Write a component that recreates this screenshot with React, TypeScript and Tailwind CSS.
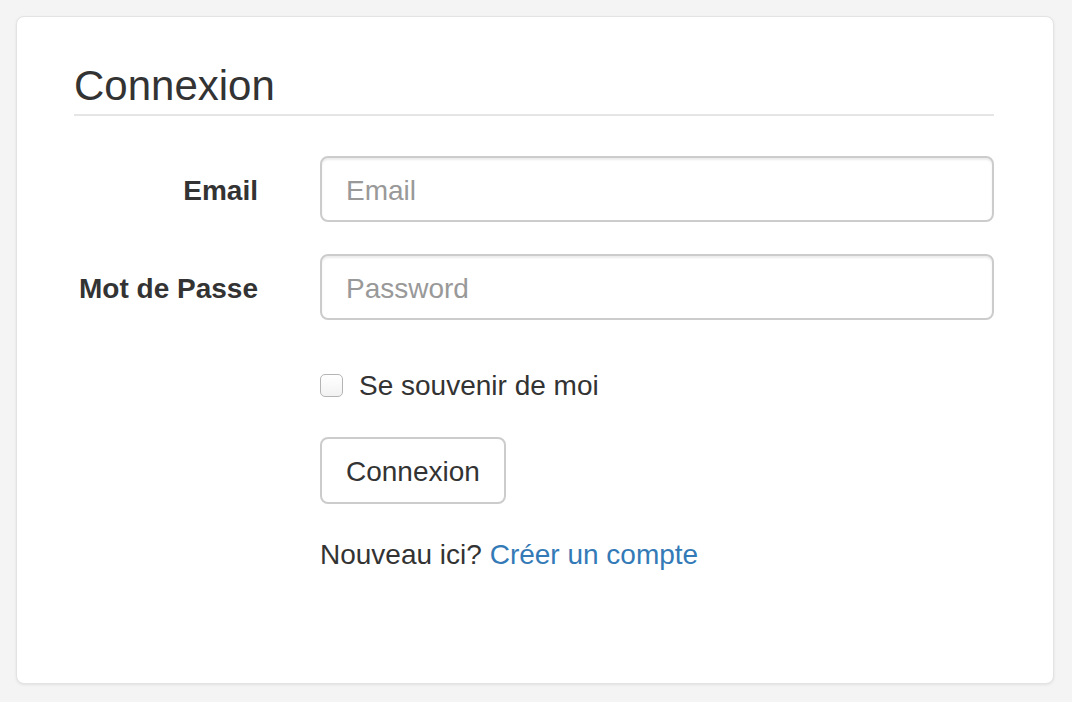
import React from "react";

export default function App() {
  return (
    <div
      className="w-full h-[702px] bg-[#f4f4f4] pt-4 pl-4 pr-[18px] pb-[18px] text-[#333]"
      style={{ fontFamily: '"Liberation Sans", Arial, Helvetica, sans-serif' }}
    >
      <div className="h-full bg-white border border-[#e3e3e3] rounded-[8px] shadow-[0_1px_3px_rgba(0,0,0,0.08)] pt-[48px] pl-[57px] pr-[59px]">
        <div className="text-[42px] leading-[42px] pb-[7px] border-b-2 border-[#e5e5e5]">Connexion</div>
        <form className="mt-[40px]" onSubmit={(e) => e.preventDefault()}>
          <div className="flex items-center">
            <label className="w-[184px] text-right font-bold text-[28px] leading-[40px] pt-[3px]">Email</label>
            <input
              type="email"
              placeholder="Email"
              className="ml-[62px] flex-1 h-[66px] border-2 border-[#ccc] rounded-[8px] px-[24px] pt-[3px] text-[28px] text-[#555] placeholder:text-[#999] shadow-[inset_0_2px_2px_rgba(0,0,0,0.075)] outline-none"
            />
          </div>
          <div className="flex items-center mt-[32px]">
            <label className="w-[184px] text-right font-bold text-[28px] leading-[40px] whitespace-nowrap pt-[3px]">Mot de Passe</label>
            <input
              type="password"
              placeholder="Password"
              className="ml-[62px] flex-1 h-[66px] border-2 border-[#ccc] rounded-[8px] px-[24px] pt-[3px] text-[28px] text-[#555] placeholder:text-[#999] shadow-[inset_0_2px_2px_rgba(0,0,0,0.075)] outline-none"
            />
          </div>
          <div className="ml-[246px]">
            <div className="flex items-center mt-[45px] h-[40px]">
              <span className="w-[23px] h-[23px] rounded-[5px] border border-[#b4b4b4] bg-gradient-to-b from-white to-[#f2f2f2] shadow-[inset_0_1px_0_rgba(255,255,255,0.8)]" />
              <span className="ml-[16px] text-[28px] leading-[40px] pt-[2px]">Se souvenir de moi</span>
            </div>
            <div className="mt-[32px] flex">
              <button
                type="submit"
                className="h-[67px] px-[24px] pt-[2px] border-2 border-[#ccc] rounded-[8px] bg-white text-[28px] leading-[40px] text-[#333]"
              >
                Connexion
              </button>
            </div>
            <div className="mt-[31px] text-[28px] leading-[40px]">
              Nouveau ici? <a href="#" className="text-[#337ab7]">Créer un compte</a>
            </div>
          </div>
        </form>
      </div>
    </div>
  );
}
